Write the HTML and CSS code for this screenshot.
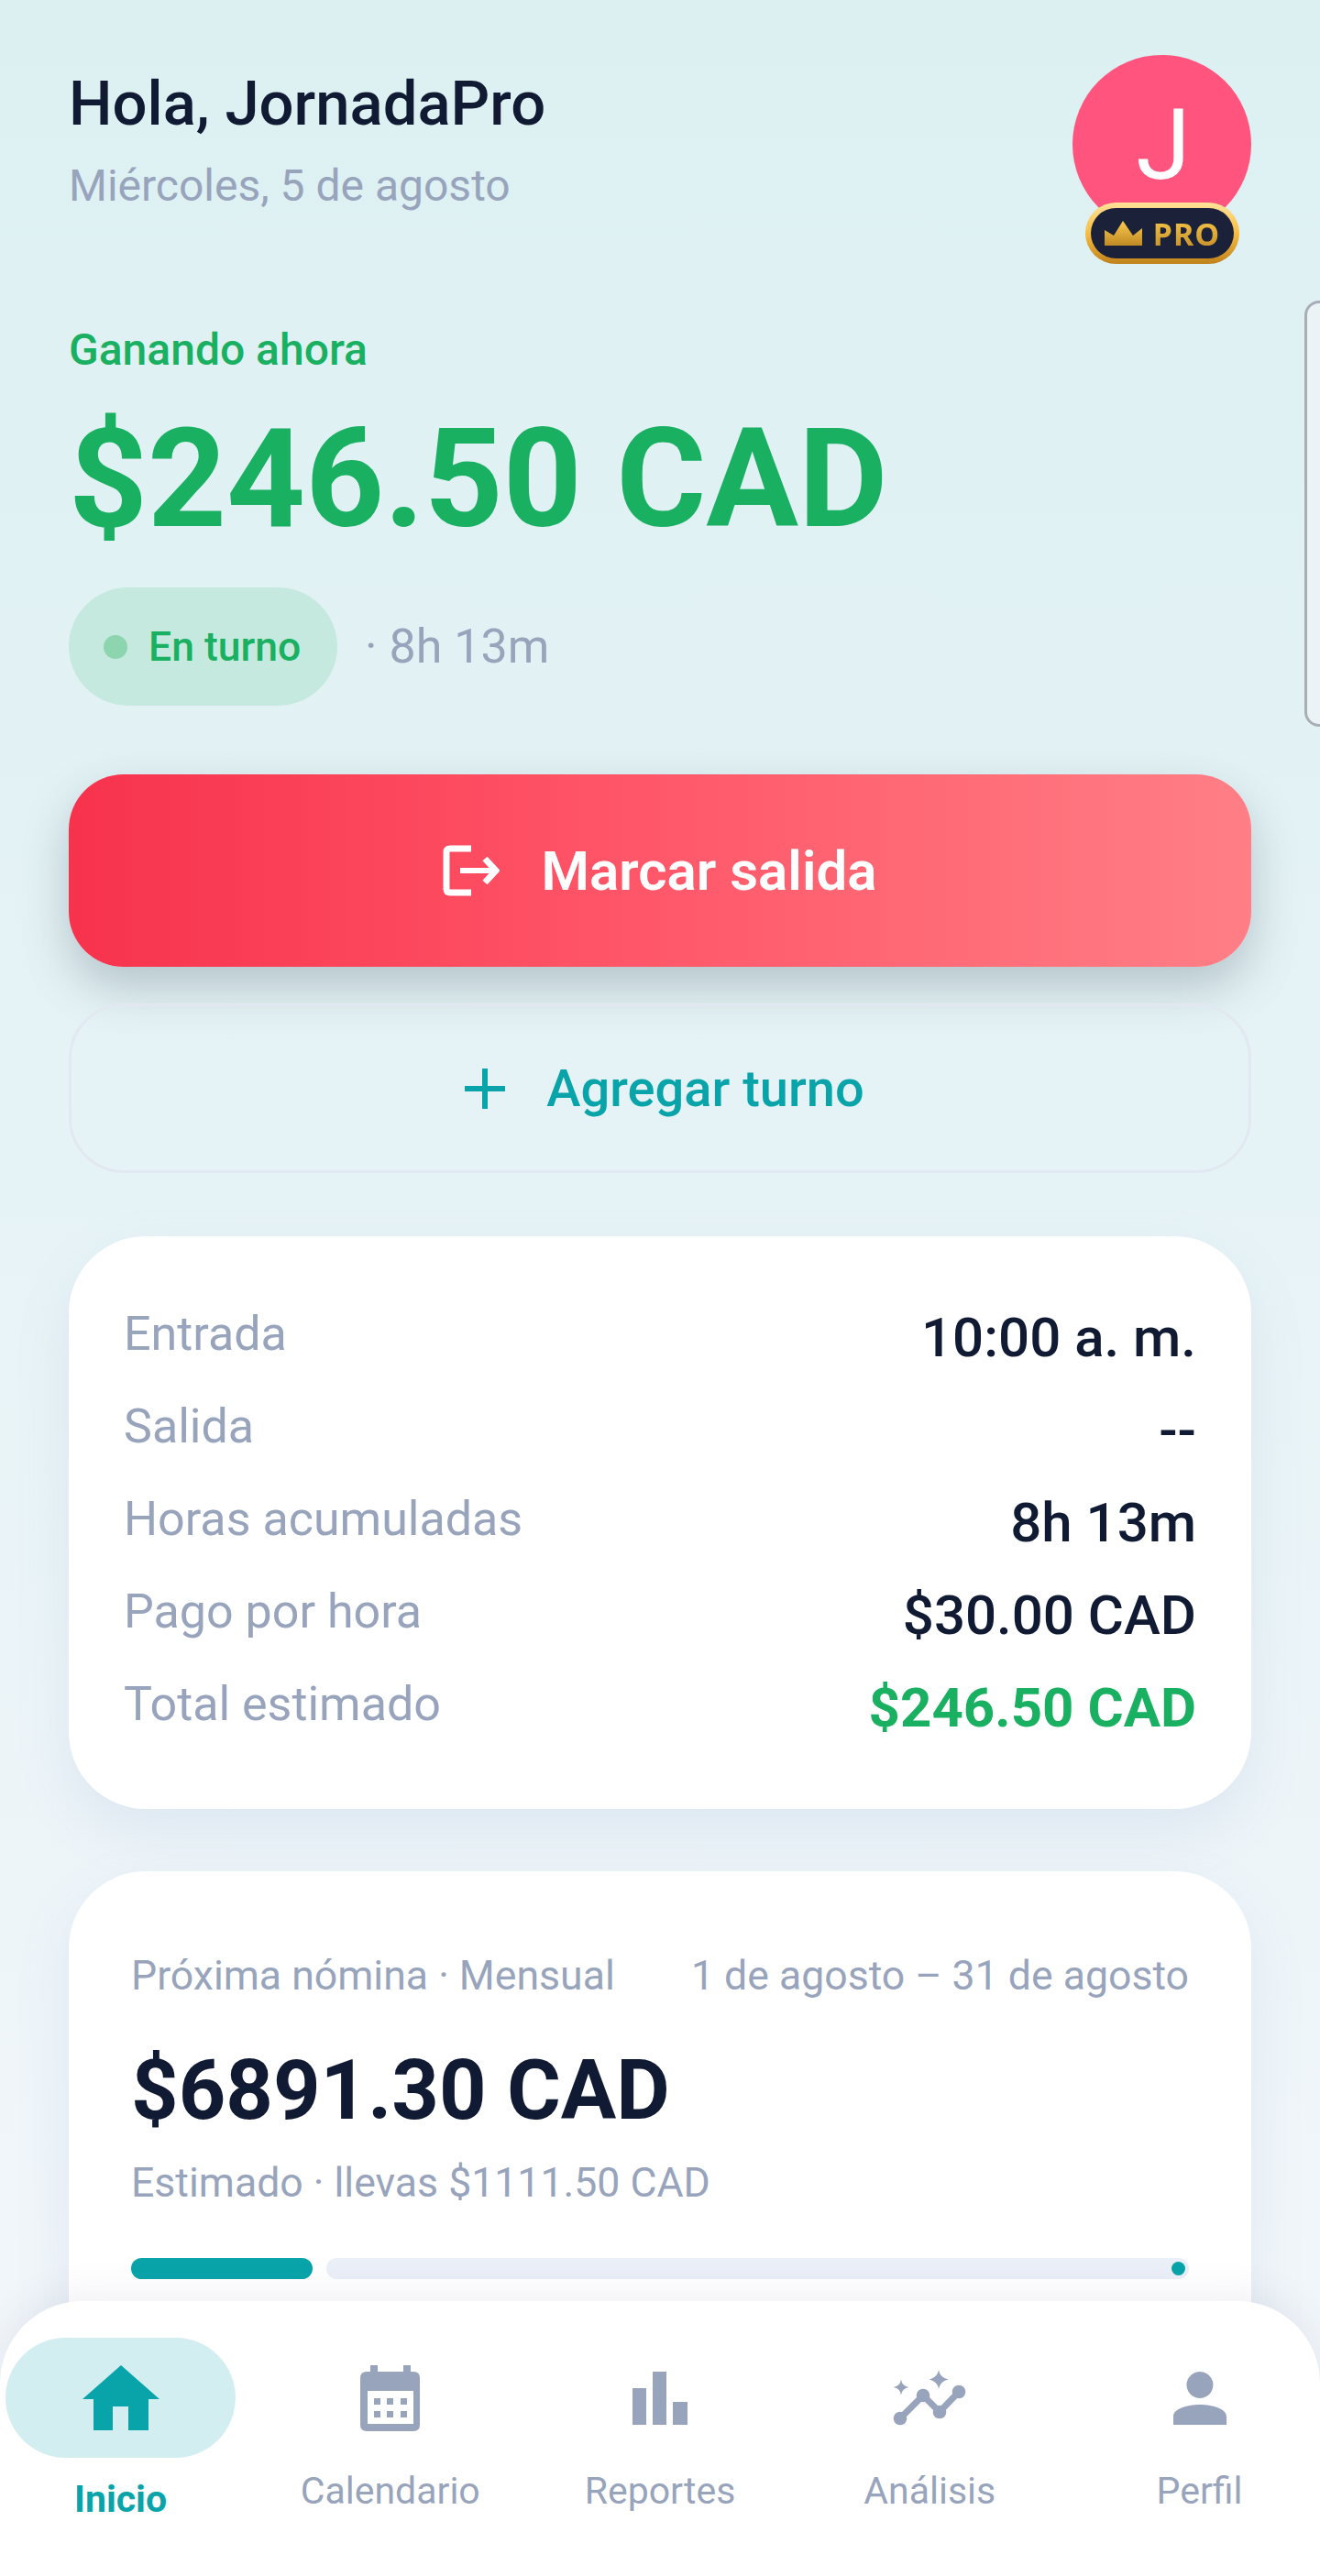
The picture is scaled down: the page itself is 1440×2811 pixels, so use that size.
FILE: index.html
```html
<!DOCTYPE html>
<html>
<head>
    <meta charset="utf-8">
    <link rel="stylesheet" href="styles.css">
</head>
<body>
<div class="screen">
    <div class="edge-tab"></div>

    <div class="top">
        <div>
            <h1 class="hello">Hola, JornadaPro</h1>
            <p class="today">Miércoles, 5 de agosto</p>
        </div>
        <div class="avatar">
            <span class="avatar-letter">J</span>
            <div class="pro-badge">
                <svg class="crown" viewBox="0 0 41 27"><defs><linearGradient id="gold" x1="0" y1="0" x2="0" y2="1"><stop offset="0" stop-color="#fbc94e"/><stop offset="1" stop-color="#c08a24"/></linearGradient></defs><path fill="url(#gold)" d="M0 10 L10 16 L20 0 L31 16 L41 8 V27 H0 Z"/></svg>
                <span class="pro-text">PRO</span>
            </div>
        </div>
    </div>

    <p class="earning-label">Ganando ahora</p>
    <p class="earning">$246.50 CAD</p>

    <div class="status">
        <div class="pill"><span class="dot"></span>En turno</div>
        <span class="elapsed">· 8h 13m</span>
    </div>

    <button class="clock-out">
        <svg class="btn-icon" viewBox="0 0 62 56"><path fill="none" stroke="#fff" stroke-width="7" d="M31 4 H8 Q4 4 4 8 V48 Q4 52 8 52 H31"/><path fill="none" stroke="#fff" stroke-width="6" d="M19 28 H58"/><path fill="none" stroke="#fff" stroke-width="7" d="M46 15 L58 28 L46 41"/></svg>
        Marcar salida
    </button>

    <button class="add-shift">
        <svg class="plus" viewBox="0 0 44 44"><path fill="none" stroke="#08a4a9" stroke-width="6" d="M22 0 V44 M0 22 H44"/></svg>
        Agregar turno
    </button>

    <div class="card details">
        <div class="row"><span class="row-label">Entrada</span><span class="row-value">10:00 a. m.</span></div>
        <div class="row"><span class="row-label">Salida</span><span class="row-value">--</span></div>
        <div class="row"><span class="row-label">Horas acumuladas</span><span class="row-value">8h 13m</span></div>
        <div class="row"><span class="row-label">Pago por hora</span><span class="row-value">$30.00 CAD</span></div>
        <div class="row"><span class="row-label">Total estimado</span><span class="row-value green">$246.50 CAD</span></div>
    </div>

    <div class="card payroll">
        <div class="pay-head"><span>Próxima nómina · Mensual</span><span>1 de agosto – 31 de agosto</span></div>
        <p class="pay-total">$6891.30 CAD</p>
        <p class="pay-note">Estimado · llevas $1111.50 CAD</p>
        <div class="progress">
            <div class="progress-done"></div>
            <div class="progress-rest"><span class="progress-end"></span></div>
        </div>
    </div>

    <nav class="nav">
        <div class="nav-item active">
            <div class="nav-pill">
                <svg class="ico-home" viewBox="0 0 84 71"><path fill="#08a4a9" d="M42 0 L84 37 H72 V71 H50 V45 H33 V71 H12 V37 H0 Z"/></svg>
            </div>
            <span class="nav-label">Inicio</span>
        </div>
        <div class="nav-item">
            <div class="nav-pill">
                <svg class="ico-cal" viewBox="0 0 65 72"><path fill="#97a4bc" fill-rule="evenodd" d="M11 0 H19 V7 H47 V0 H55 V7 H58 Q65 7 65 14 V65 Q65 72 58 72 H7 Q0 72 0 65 V14 Q0 7 7 7 H11 Z M8 28 V64 H58 V28 Z"/><path fill="#97a4bc" d="M15 36 H22 V43 H15 Z M29 36 H36 V43 H29 Z M44 36 H51 V43 H44 Z M15 50 H22 V57 H15 Z M29 50 H36 V57 H29 Z M44 50 H51 V57 H44 Z"/></svg>
            </div>
            <span class="nav-label">Calendario</span>
        </div>
        <div class="nav-item">
            <div class="nav-pill">
                <svg class="ico-bars" viewBox="0 0 60 58"><path fill="#97a4bc" d="M0 18 H15 V58 H0 Z M22 0 H37 V58 H22 Z M44 33 H60 V58 H44 Z"/></svg>
            </div>
            <span class="nav-label">Reportes</span>
        </div>
        <div class="nav-item">
            <div class="nav-pill">
                <svg class="ico-spark" viewBox="0 0 80 62"><g fill="#97a4bc"><path d="M50 0 Q51 8 60.500 10.500 Q51 13 50 21 Q49 13 39.500 10.500 Q49 8 50 0 Z"/><path d="M9 10.500 Q10 18 17.500 19 Q10 20 9 27.500 Q8 20 0.500 19 Q8 18 9 10.500 Z"/><circle cx="8" cy="53" r="7.300"/><circle cx="33" cy="28" r="7.300"/><circle cx="51" cy="46" r="7.300"/><circle cx="72" cy="24" r="7.300"/></g><path fill="none" stroke="#97a4bc" stroke-width="7" d="M8 53 L33 28 L51 46 L72 24"/></svg>
            </div>
            <span class="nav-label">Análisis</span>
        </div>
        <div class="nav-item">
            <div class="nav-pill">
                <svg class="ico-user" viewBox="0 0 58 58"><path fill="#97a4bc" d="M29 0 A14.500 14.500 0 1 1 28.900 0 Z M0 58 V49 C0 41 14 36 29 36 C44 36 58 41 58 49 V58 Z"/></svg>
            </div>
            <span class="nav-label">Perfil</span>
        </div>
    </nav>
</div>
</body>
</html>
```

FILE: styles.css
```css
* {
  box-sizing: border-box;
}

html, body {
  margin: 0;
  padding: 0;
}

body {
  font-family: Roboto, "Liberation Sans", sans-serif;
  color: #101a33;
}

p, h1 {
  margin: 0;
}

.screen {
  position: relative;
  width: 1440px;
  height: 2811px;
  overflow: hidden;
  padding: 60px 75px 0;
  background: linear-gradient(180deg, #dcf0f2 0%, #e6f3f6 45%, #eef5f9 75%, #f3f7fa 100%);
}

.edge-tab {
  position: absolute;
  right: -20px;
  top: 328px;
  width: 37px;
  height: 465px;
  border: 3px solid #a9adb5;
  border-radius: 16px;
  background: #ebf3f6;
}

.top {
  display: flex;
  justify-content: space-between;
  height: 292px;
}

.hello {
  margin-top: 11px;
  font-size: 67px;
  line-height: 84px;
  font-weight: 500;
}

.today {
  margin-top: 18px;
  font-size: 48px;
  line-height: 60px;
  color: #97a4bc;
}

.avatar {
  position: relative;
  width: 195px;
  height: 195px;
  border-radius: 50%;
  background: #ff547d;
  color: #fff;
  text-align: center;
}

.avatar-letter {
  padding-left: 3px;
  font-size: 108px;
  line-height: 196px;
}

.pro-badge {
  position: absolute;
  left: 14px;
  top: 161px;
  width: 168px;
  height: 67px;
  border-radius: 34px;
  background: #1a2138;
  border: 6px solid transparent;
  background-image: linear-gradient(#1a2138, #1a2138), linear-gradient(180deg, #ffe29a 0%, #f7bd42 50%, #c0821b 100%);
  background-origin: border-box;
  background-clip: padding-box, border-box;
  display: flex;
  align-items: center;
  justify-content: center;
  gap: 12px;
}

.crown {
  width: 41px;
  height: 27px;
}

.pro-text {
  font-family: "Noto Sans", sans-serif;
  font-size: 34px;
  line-height: 40px;
  font-weight: 700;
  letter-spacing: 1px;
  background: linear-gradient(180deg, #fbc94e, #c08a24);
  -webkit-background-clip: text;
  background-clip: text;
  color: transparent;
}

.earning-label {
  font-size: 48px;
  line-height: 60px;
  font-weight: 500;
  color: #19b061;
}

.earning {
  margin-top: 30px;
  font-size: 150px;
  line-height: 162px;
  font-weight: 700;
  color: #19b061;
}

.status {
  display: flex;
  align-items: center;
  margin-top: 37px;
  gap: 30px;
}

.pill {
  display: flex;
  align-items: center;
  width: 293px;
  height: 129px;
  padding-left: 38px;
  border-radius: 65px;
  background: #c6e9df;
  font-size: 44.500px;
  font-weight: 500;
  color: #19b061;
}

.dot {
  width: 26px;
  height: 26px;
  margin-right: 23px;
  border-radius: 50%;
  background: #8cd5af;
}

.elapsed {
  font-size: 52px;
  color: #97a4bc;
}

button {
  display: flex;
  align-items: center;
  justify-content: center;
  width: 1290px;
  font-family: inherit;
}

.clock-out {
  height: 210px;
  margin-top: 75px;
  padding-left: 6px;
  border: 0;
  border-radius: 60px;
  background: linear-gradient(90deg, #f7324c 0%, #ff5467 45%, #ff7f86 100%);
  box-shadow: 0 22px 50px rgba(40, 60, 70, 0.25);
  color: #fff;
  font-size: 60px;
  font-weight: 600;
  gap: 45px;
}

.btn-icon {
  width: 62px;
  height: 56px;
}

.add-shift {
  height: 185px;
  margin-top: 40px;
  padding-left: 16px;
  border: 3px solid #e2e8f1;
  border-radius: 60px;
  background: transparent;
  color: #08a4a9;
  font-size: 56px;
  font-weight: 500;
  gap: 45px;
}

.plus {
  width: 44px;
  height: 44px;
}

.card {
  background: #fff;
  border-radius: 84px;
  box-shadow: 0 24px 60px rgba(120, 150, 190, 0.13);
}

.details {
  height: 625px;
  margin-top: 69px;
  padding: 77px 60px 0;
}

.row {
  display: flex;
  justify-content: space-between;
  align-items: flex-start;
  height: 101px;
}

.row-label {
  font-size: 52px;
  line-height: 60px;
  color: #97a4bc;
}

.row-value {
  margin-top: 2px;
  font-size: 60px;
  line-height: 64px;
  font-weight: 500;
}

.row-value.green {
  font-weight: 700;
  color: #19b061;
}

.payroll {
  height: 700px;
  margin-top: 68px;
  padding: 84px 68px 0 68px;
}

.pay-head {
  display: flex;
  justify-content: space-between;
  font-size: 44.600px;
  line-height: 60px;
  color: #97a4bc;
}

.pay-total {
  margin-top: 46px;
  font-size: 90px;
  line-height: 100px;
  font-weight: 700;
}

.pay-note {
  margin-top: 20px;
  font-size: 44.600px;
  line-height: 60px;
  color: #97a4bc;
}

.progress {
  display: flex;
  gap: 15px;
  margin-top: 52px;
  height: 23px;
}

.progress-done {
  width: 198px;
  border-radius: 12px;
  background: #08a4a9;
}

.progress-rest {
  flex: 1;
  display: flex;
  justify-content: flex-end;
  align-items: center;
  padding-right: 4px;
  border-radius: 12px;
  background: #ebeff8;
}

.progress-end {
  width: 15px;
  height: 15px;
  border-radius: 50%;
  background: #08a4a9;
}

.nav {
  position: absolute;
  left: 0;
  right: 0;
  top: 2511px;
  bottom: 0;
  display: flex;
  justify-content: space-between;
  padding: 40px 6px 0;
  background: #fff;
  border-radius: 90px 90px 0 0;
  box-shadow: 0 -8px 40px rgba(90, 80, 130, 0.09);
}

.nav-item {
  display: flex;
  flex-direction: column;
  align-items: center;
  width: 251px;
}

.nav-pill {
  display: flex;
  align-items: center;
  justify-content: center;
  width: 251px;
  height: 131px;
  border-radius: 66px;
}

.active .nav-pill {
  background: #d3eef1;
}

.nav-label {
  margin-top: 8px;
  font-size: 41px;
  line-height: 56px;
  color: #97a4bc;
}

.active .nav-label {
  margin-top: 17px;
  font-weight: 700;
  color: #08a4a9;
}

.ico-home {
  width: 84px;
  height: 71px;
}

.ico-cal {
  width: 65px;
  height: 72px;
}

.ico-bars {
  width: 60px;
  height: 58px;
}

.ico-spark {
  width: 80px;
  height: 62px;
}

.ico-user {
  width: 58px;
  height: 58px;
}
```
